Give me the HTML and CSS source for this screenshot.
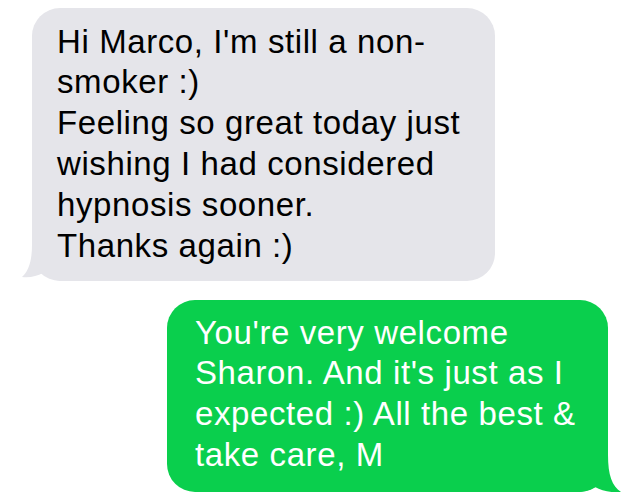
FILE: index.html
```html
<!DOCTYPE html>
<html lang="en">
<head>
    <meta charset="UTF-8">
    <meta name="viewport" content="width=device-width, initial-scale=1.0">
    <title>Messages</title>
    <link rel="stylesheet" href="styles.css">
</head>
<body>
    <div class="thread">
        <!-- Incoming message -->
        <div class="bubble received">
            <p>Hi Marco, I'm still a non-<br>smoker :)<br>Feeling so great today just<br>wishing I had considered<br>hypnosis sooner.<br>Thanks again :)</p>
            <svg class="tail" width="40" height="36" viewBox="0 0 40 36">
                <path d="M10,0 C10,17 6,27 0,32 C8,33 15,31 21,28 C26,32 32,35 40,36 L40,0 Z"/>
            </svg>
        </div>

        <!-- Outgoing message -->
        <div class="bubble sent">
            <p>You're very welcome<br>Sharon. And it's just as I<br>expected :) All the best &amp;<br>take care, M</p>
            <svg class="tail" width="48" height="37" viewBox="0 0 48 37">
                <path d="M33,0 C33,20 37,31 46,37 C37,38 27,36 20,32 C15,35 9,37 0,37 L0,0 Z"/>
            </svg>
        </div>
    </div>
</body>
</html>
```

FILE: styles.css
```css
body {
    font-family: "Liberation Sans", Arial, sans-serif;
    background: #fff;
    margin: 0;
    padding: 0;
}

.thread {
    display: flex;
    flex-direction: column;
    padding-top: 8px;
}

.bubble {
    position: relative;
    box-sizing: border-box;
    border-radius: 28px;
}

.bubble p {
    margin: 0;
    font-size: 33px;
    letter-spacing: 0.6px;
    line-height: 40.8px;
}

.received {
    width: 463px;
    margin-left: 32px;
    padding: 13.6px 20px 14.6px 25px;
    background: #e5e5ea;
    color: #000;
}

.received .tail {
    position: absolute;
    left: -10px;
    bottom: 0;
    fill: #e5e5ea;
}

.sent {
    width: 441px;
    margin-left: 167px;
    margin-top: 19px;
    padding: 12.6px 20px 16.2px 28px;
    background: #0acf4d;
    color: #fff;
}

.sent .tail {
    position: absolute;
    right: -15px;
    bottom: 0;
    fill: #0acf4d;
}
```
